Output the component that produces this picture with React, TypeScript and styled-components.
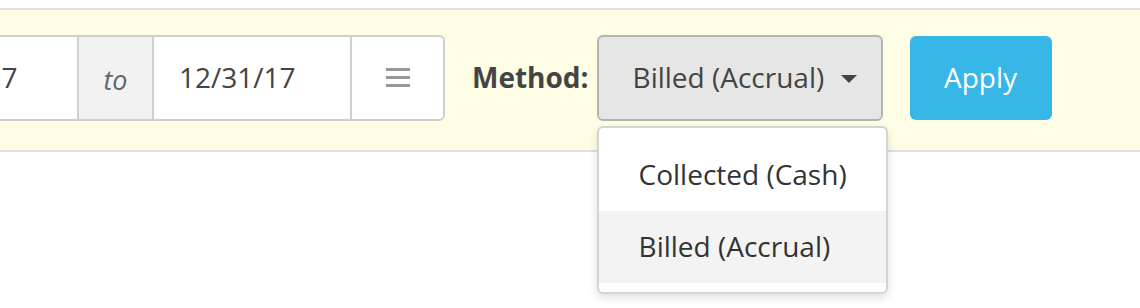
import React from "react";
import styled, { createGlobalStyle } from "styled-components";

const Global = createGlobalStyle`
  html, body { margin: 0; padding: 0; background: #fff; }
  body { font-family: "Open Sans", "Liberation Sans", sans-serif; overflow: hidden; }
`;

const Page = styled.div`
  width: 1140px;
  height: 308px;
  padding-top: 8px;
  box-sizing: border-box;
  overflow: hidden;
`;

const FilterBar = styled.div`
  height: 140px;
  box-sizing: content-box;
  background: #fffde3;
  border-top: 2px solid #dedede;
  border-bottom: 2px solid #dedede;
  display: flex;
  align-items: flex-start;
`;

const Row = styled.div`
  display: flex;
  align-items: center;
  margin-top: 25px;
  margin-left: -126px;
`;

const DateGroup = styled.div`
  display: flex;
  height: 86px;
  box-sizing: border-box;
  border: 2px solid #cfcfcf;
  border-radius: 6px;
  background: #fff;
  overflow: hidden;
`;

const DateInput = styled.div<{ $width: number }>`
  width: ${(p) => p.$width}px;
  display: flex;
  align-items: center;
  padding-left: 25px;
  padding-bottom: 3px;
  box-sizing: border-box;
  font-size: 28px;
  color: #444;
`;

const Addon = styled.div`
  width: 73px;
  display: flex;
  align-items: center;
  justify-content: center;
  background: #f2f2f2;
  border-left: 2px solid #cfcfcf;
  border-right: 2px solid #cfcfcf;
  font-size: 27px;
  font-style: italic;
  color: #666;
  padding-top: 2px;
  box-sizing: content-box;
`;

const MenuCell = styled.div`
  width: 91px;
  display: flex;
  align-items: center;
  justify-content: center;
  border-left: 2px solid #cfcfcf;
`;

const Label = styled.div`
  margin-left: 27px;
  margin-right: 8px;
  padding-bottom: 3px;
  font-size: 28px;
  font-weight: 700;
  color: #444;
`;

const SelectWrap = styled.div`
  position: relative;
`;

const SelectButton = styled.div`
  width: 286px;
  height: 86px;
  box-sizing: border-box;
  background: #e6e6e6;
  border: 2px solid #b3b3b3;
  border-radius: 6px;
  display: flex;
  align-items: center;
  padding-left: 34px;
  padding-bottom: 3px;
  font-size: 28px;
  color: #444;
`;

const Caret = styled.span`
  margin-left: 17px;
  margin-top: 4px;
  width: 0;
  height: 0;
  border-left: 8px solid transparent;
  border-right: 8px solid transparent;
  border-top: 8px solid #444;
`;

const Menu = styled.div`
  position: absolute;
  top: 91px;
  left: 0;
  width: 291px;
  box-sizing: border-box;
  background: #fff;
  border: 2px solid #d4d4d4;
  border-radius: 6px;
  box-shadow: 0 4px 10px rgba(0, 0, 0, 0.12);
  padding: 11px 0 9px;
  z-index: 2;
`;

const MenuItem = styled.div<{ $active?: boolean }>`
  height: 72px;
  box-sizing: border-box;
  display: flex;
  align-items: center;
  padding-left: 40px;
  padding-bottom: 3px;
  font-size: 28px;
  color: #333;
  background: ${(p) => (p.$active ? "#f3f3f3" : "transparent")};
`;

const ApplyButton = styled.div`
  margin-left: 27px;
  width: 142px;
  height: 84px;
  box-sizing: border-box;
  padding-bottom: 3px;
  background: #36b7e7;
  border-radius: 6px;
  display: flex;
  align-items: center;
  justify-content: center;
  color: #fff;
  font-size: 28px;
`;

const Hamburger = () => (
  <svg width="24" height="20" viewBox="0 0 24 20">
    <rect x="0" y="0" width="24" height="3" fill="#999" />
    <rect x="0" y="8" width="24" height="3" fill="#999" />
    <rect x="0" y="16" width="24" height="3" fill="#999" />
  </svg>
);

export default function App() {
  return (
    <Page>
      <Global />
      <FilterBar>
        <Row>
          <DateGroup>
            <DateInput $width={201}>01/01/17</DateInput>
            <Addon>to</Addon>
            <DateInput $width={196}>12/31/17</DateInput>
            <MenuCell>
              <Hamburger />
            </MenuCell>
          </DateGroup>
          <Label>Method:</Label>
          <SelectWrap>
            <SelectButton>
              Billed (Accrual)
              <Caret />
            </SelectButton>
            <Menu>
              <MenuItem>Collected (Cash)</MenuItem>
              <MenuItem $active>Billed (Accrual)</MenuItem>
            </Menu>
          </SelectWrap>
          <ApplyButton>Apply</ApplyButton>
        </Row>
      </FilterBar>
    </Page>
  );
}
